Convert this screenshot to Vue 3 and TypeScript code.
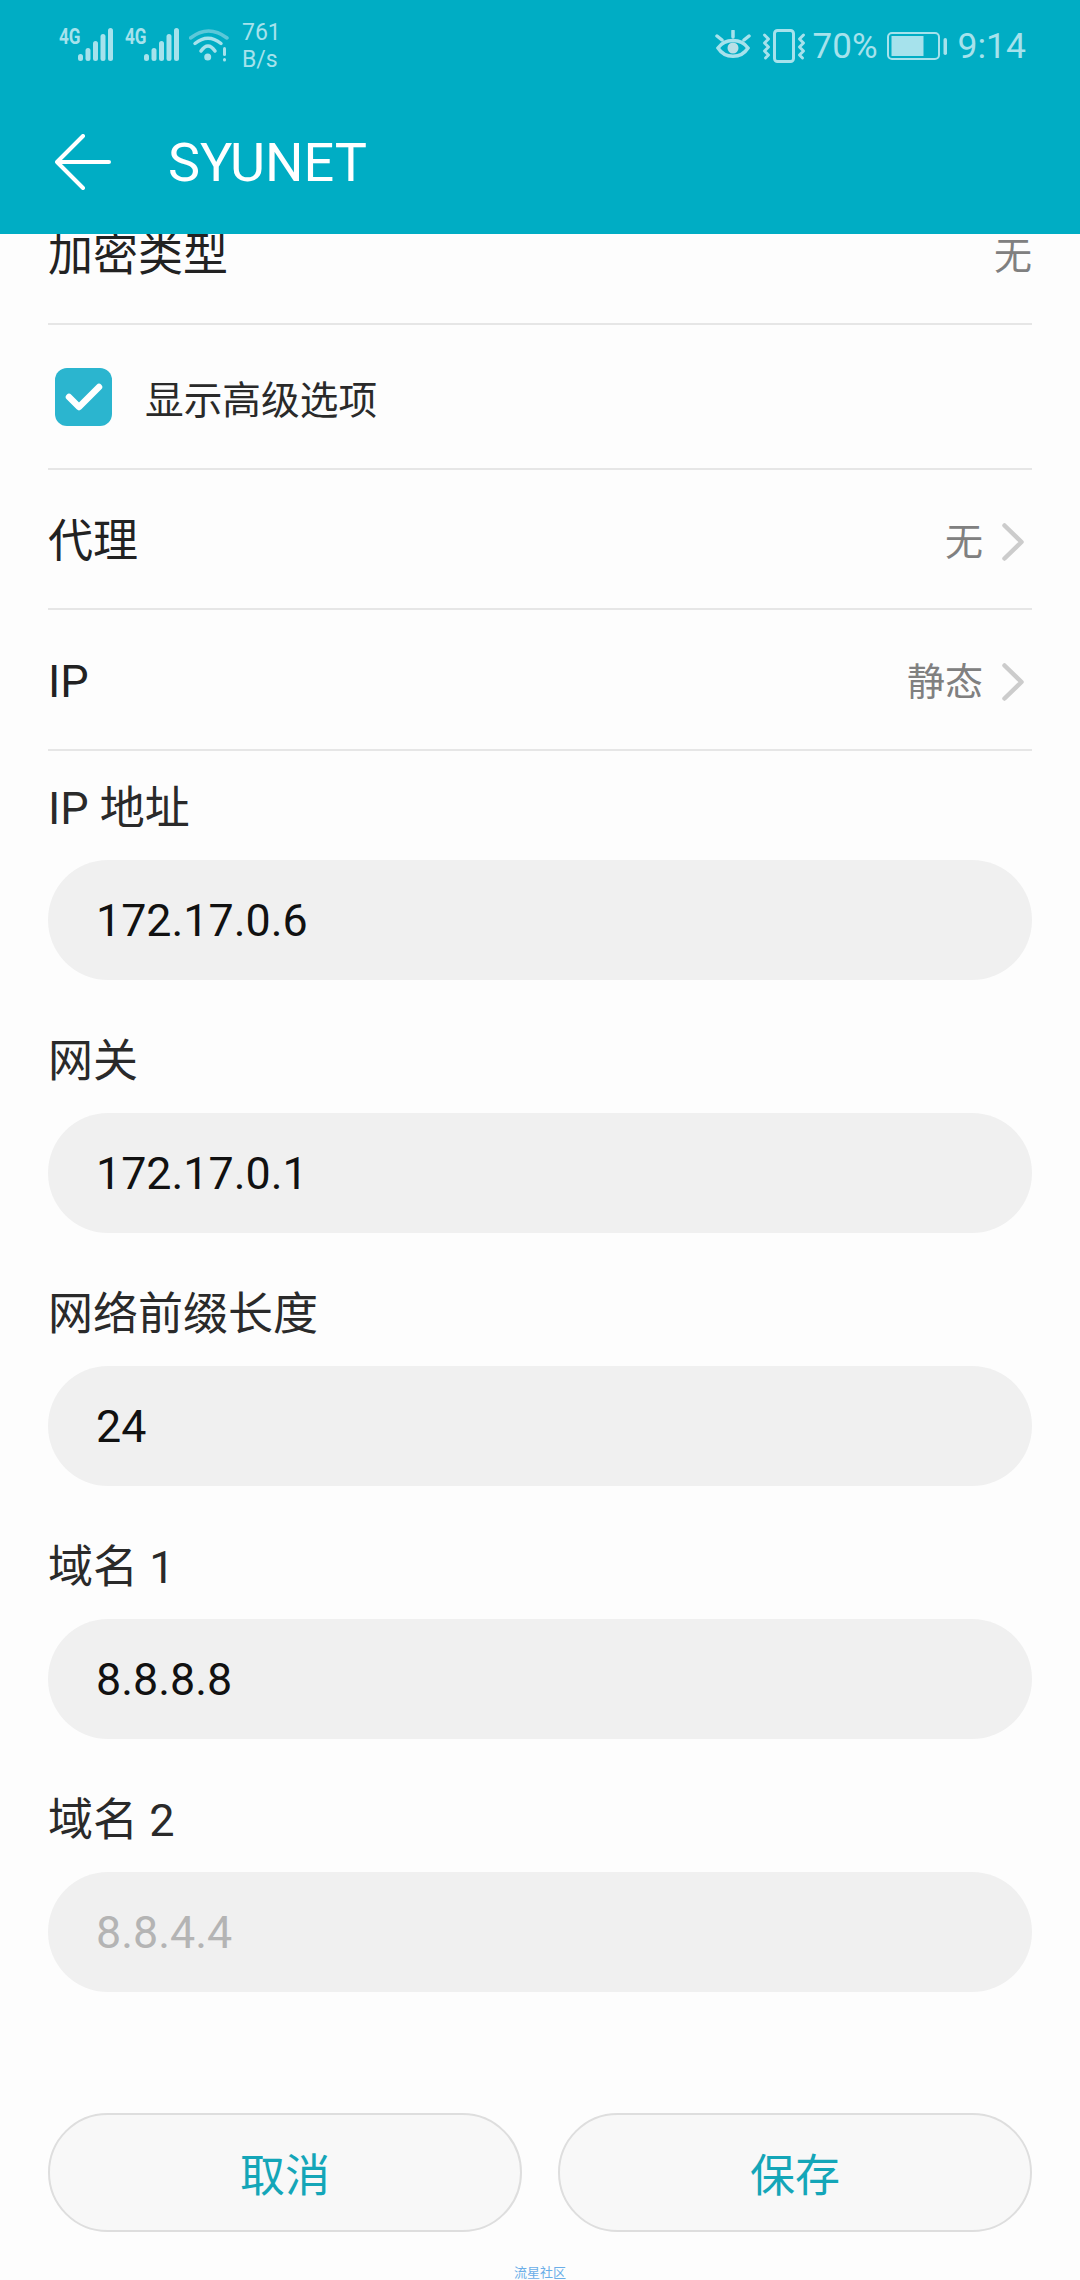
<script setup lang="ts">
const fields = [
  { label: 'IP 地址', value: '172.17.0.6' },
  { label: '网关', value: '172.17.0.1' },
  { label: '网络前缀长度', value: '24' },
  { label: '域名 1', value: '8.8.8.8' },
  { label: '域名 2', value: '8.8.4.4', hint: true },
]
const bars = [
  { x: 0, y: 26, h: 7 },
  { x: 7.5, y: 20, h: 13 },
  { x: 15, y: 13, h: 20 },
  { x: 22.5, y: 6, h: 27 },
  { x: 30, y: 0, h: 33 },
]
</script>

<template>
  <div class="page">
    <header class="header">
      <div class="status">
        <div class="status-left">
          <div v-for="n in 2" :key="n" class="sim">
            <span class="four-g">4G</span>
            <svg class="signal" width="35" height="33" viewBox="0 0 35 33">
              <rect v-for="b in bars" :key="b.x" :x="b.x" :y="b.y" width="5" :height="b.h" rx="2.5" fill="#a6e2ec" />
            </svg>
          </div>
          <svg class="wifi" width="40" height="35" viewBox="0 0 40 35" fill="none" stroke-linecap="round">
            <path d="M1.500 10 Q19.500 -4 38 10" stroke="#5cc8d9" stroke-width="3.5" />
            <path d="M6 15.500 Q19 5 32 15.500" stroke="#a6e2ec" stroke-width="3.5" />
            <path d="M12 23 Q19 13 26 23" stroke="#a6e2ec" stroke-width="3.5" />
            <circle cx="18.700" cy="29" r="3.500" fill="#a6e2ec" />
            <rect x="34" y="19" width="3" height="9" rx="1.500" fill="#a6e2ec" />
            <rect x="34" y="30" width="3" height="3.500" rx="1.500" fill="#a6e2ec" />
          </svg>
          <div class="speed"><span>761</span><span>B/s</span></div>
        </div>
        <div class="status-right">
          <svg class="eye" width="36" height="32" viewBox="0 0 36 32" fill="none" stroke="#a6e2ec" stroke-width="3.5" stroke-linecap="round">
            <path d="M3 18 C10 8 26 8 33 18 C26 29 10 29 3 18 Z" />
            <circle cx="18" cy="18" r="5.500" fill="#b9dfe6" stroke="none" />
            <path d="M18 1 V7 M2 6 L7 10 M34 6 L29 10" />
          </svg>
          <svg class="vibrate" width="44" height="34" viewBox="0 0 44 34" fill="none" stroke="#a6e2ec" stroke-linecap="round" stroke-linejoin="round">
            <rect x="12.500" y="1.500" width="19" height="31" rx="3" stroke-width="3" />
            <path d="M2.500 6 L6.500 10 L2.500 14 L6.500 18 L2.500 22 L6.500 26 L3.500 29" stroke-width="3" />
            <path d="M41.500 6 L37.500 10 L41.500 14 L37.500 18 L41.500 22 L37.500 26 L40.500 29" stroke-width="3" />
          </svg>
          <span class="percent">70%</span>
          <svg class="battery" width="61" height="28" viewBox="0 0 61 28" fill="none">
            <rect x="1" y="1" width="51" height="26" rx="4" stroke="#a6e2ec" stroke-width="2" />
            <rect x="4.500" y="4" width="32" height="20" fill="#a6e2ec" />
            <rect x="56.500" y="6" width="3.500" height="17" rx="1.750" fill="#a6e2ec" />
          </svg>
          <span class="clock">9:14</span>
        </div>
      </div>
      <div class="toolbar">
        <svg class="back" width="56" height="56" viewBox="0 0 56 56" fill="none" stroke="#fff" stroke-width="4" stroke-linecap="round" stroke-linejoin="round">
          <path d="M28 2 L2 28 L28 54 M2 28 H54" />
        </svg>
        <span class="title">SYUNET</span>
      </div>
    </header>

    <main class="content">
      <div class="row row-clipped">
        <span class="row-label">加密类型</span>
        <span class="row-value">无</span>
      </div>
      <div class="row row-check">
        <span class="checkbox">
          <svg width="38" height="30" viewBox="0 0 38 30" fill="none" stroke="#fff" stroke-width="6.500" stroke-linecap="round" stroke-linejoin="round">
            <path d="M4 15 L14 25 L34 5" />
          </svg>
        </span>
        <span class="check-label">显示高级选项</span>
      </div>
      <div class="row row-nav">
        <span class="row-label">代理</span>
        <span class="row-value">无</span>
        <svg class="chevron" width="22" height="38" viewBox="0 0 22 38" fill="none" stroke="#cccccc" stroke-width="4.500" stroke-linecap="round" stroke-linejoin="round">
          <path d="M2.500 2.500 L19.500 19 L2.500 35.500" />
        </svg>
      </div>
      <div class="row row-nav row-nav-last">
        <span class="row-label">IP</span>
        <span class="row-value">静态</span>
        <svg class="chevron" width="22" height="38" viewBox="0 0 22 38" fill="none" stroke="#cccccc" stroke-width="4.500" stroke-linecap="round" stroke-linejoin="round">
          <path d="M2.500 2.500 L19.500 19 L2.500 35.500" />
        </svg>
      </div>

      <div class="fields">
        <div v-for="f in fields" :key="f.label" class="field">
          <div class="field-label">{{ f.label }}</div>
          <div class="input" :class="{ hint: f.hint }">{{ f.value }}</div>
        </div>
      </div>

      <div class="buttons">
        <button class="btn">取消</button>
        <button class="btn">保存</button>
      </div>
    </main>
    <div class="watermark">流星社区</div>
  </div>
</template>

<style>
html, body { margin: 0; background: #fdfdfd; }
</style>

<style scoped>
.page {
  width: 1080px;
  height: 2280px;
  overflow: hidden;
  background: #fdfdfd;
  display: flex;
  flex-direction: column;
  font-family: Roboto, "Noto Sans CJK SC", sans-serif;
  color: #222;
}
.header {
  height: 234px;
  flex: none;
  background: #00adc4;
  position: relative;
  z-index: 1;
  display: flex;
  flex-direction: column;
}
.status {
  height: 90px;
  display: flex;
  justify-content: space-between;
  padding: 0 54px 0 59px;
  color: #a6e2ec;
}
.status-left { display: flex; align-items: flex-start; padding-top: 28px; }
.sim { display: flex; align-items: flex-start; margin-right: 12px; }
.four-g {
  font-size: 21.500px;
  line-height: 17px;
  font-weight: 700;
  width: 19px;
  display: inline-block;
  transform: scaleX(0.8);
  transform-origin: left top;
}
.wifi { margin-left: -2px; }
.speed {
  display: flex;
  flex-direction: column;
  margin: -9px 0 0 13px;
  font-size: 23px;
  line-height: 27px;
}
.status-right { display: flex; align-items: center; height: 92px; }
.eye { margin-right: 11px; }
.vibrate { margin-right: 7px; }
.percent { font-size: 35px; margin-right: 9px; }
.battery { margin-right: 10px; }
.clock { font-size: 35.500px; }
.toolbar {
  height: 144px;
  display: flex;
  align-items: center;
  padding-left: 55px;
}
.title {
  margin-left: 57px;
  font-size: 54px;
  color: #fff;
}
.content {
  flex: 1;
  padding: 0 48px;
  display: flex;
  flex-direction: column;
}
.row {
  display: flex;
  align-items: center;
  border-bottom: 2px solid #e6e6e6;
}
.row-clipped { height: 89px; align-items: flex-start; }
.row-check { height: 143px; padding-left: 7px; }
.row-nav { height: 133px; padding-top: 5px; }
.row-nav-last { height: 134px; }
.row-label { font-size: 45px; line-height: 44px; color: #222; flex: 1; }
.row-value { font-size: 38px; line-height: 44px; color: #808080; }
.chevron { margin: 0 8px 0 19px; }
.checkbox {
  width: 57px;
  height: 58px;
  border-radius: 12px;
  background: #2bb5cf;
  display: flex;
  align-items: center;
  justify-content: center;
}
.check-label { margin-left: 33px; font-size: 38.700px; color: #2a2a2a; }
.fields { display: flex; flex-direction: column; gap: 25px; margin-top: 1px; }
.field-label {
  font-size: 45px;
  line-height: 66px;
  padding: 24px 0 18px;
  color: #2a2a2a;
}
.input {
  height: 120px;
  border-radius: 60px;
  background: #f0f0f0;
  display: flex;
  align-items: center;
  padding-left: 48px;
  font-size: 44.800px;
  color: #111;
}
.input.hint { color: #b4b4b4; }
.buttons {
  margin-top: 121px;
  display: flex;
  gap: 36px;
}
.btn {
  flex: 1;
  height: 119px;
  border-radius: 60px;
  border: 2px solid #dedede;
  background: #f8f8f8;
  color: #14a6b8;
  font-family: inherit;
  font-size: 45px;
  padding: 0;
}
.watermark {
  flex: none;
  height: 15px;
  text-align: center;
  font-size: 13px;
  line-height: 15px;
  color: #6aaee8;
}
</style>
